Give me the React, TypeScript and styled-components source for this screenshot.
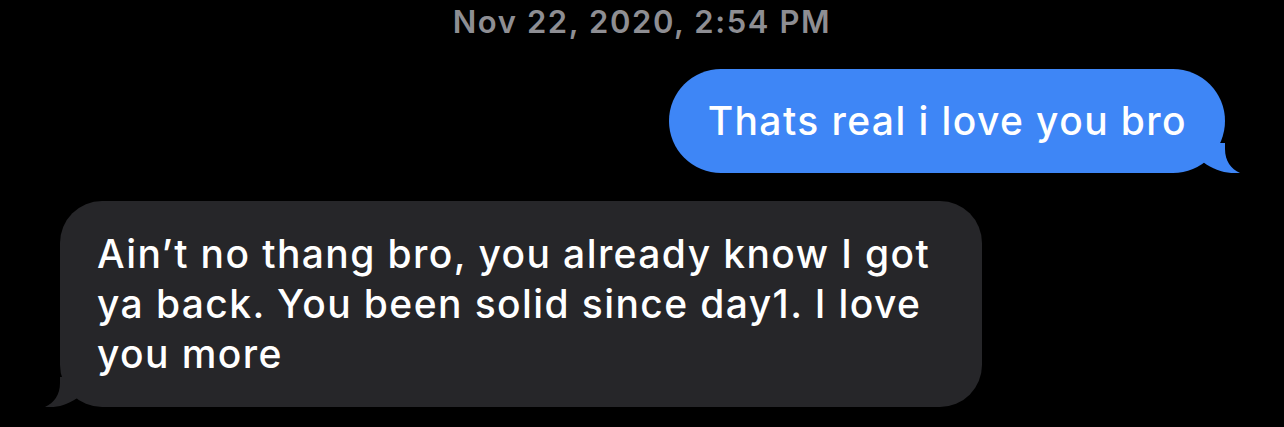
import styled, { createGlobalStyle } from 'styled-components';

const GlobalStyle = createGlobalStyle`
  html, body {
    margin: 0;
    padding: 0;
    background: #000000;
  }
  body {
    font-family: Inter, "Noto Sans", "Liberation Sans", sans-serif;
    -webkit-font-smoothing: antialiased;
  }
`;

const Screen = styled.div`
  width: 1284px;
  height: 427px;
  background: #000000;
  display: flex;
  flex-direction: column;
  overflow: hidden;
`;

const Stamp = styled.div`
  height: 42px;
  display: flex;
  align-items: center;
  justify-content: center;
  color: #8e8e93;
  font-size: 31px;
  font-weight: 600;
  letter-spacing: 1.6px;
`;

const Row = styled.div<{ mine: boolean }>`
  display: flex;
  justify-content: ${(p) => (p.mine ? 'flex-end' : 'flex-start')};
  padding: ${(p) => (p.mine ? '0 59px 0 0' : '0 0 0 60px')};
  margin-top: ${(p) => (p.mine ? '27px' : '28px')};
`;

const Bubble = styled.div<{ mine: boolean }>`
  position: relative;
  box-sizing: border-box;
  width: ${(p) => (p.mine ? 'auto' : '922px')};
  background: ${(p) => (p.mine ? '#3e86f6' : '#262629')};
  color: #ffffff;
  border-radius: ${(p) => (p.mine ? '52px' : '42px')};
  padding: ${(p) => (p.mine ? '27px 38px 27px 39px' : '28px 40px 28px 37px')};
  font-size: 39px;
  line-height: 50px;
  font-weight: 500;
  letter-spacing: 1.4px;
`;

const Tail = styled.svg<{ mine: boolean; edge: number }>`
  position: absolute;
  bottom: 0;
  width: ${(p) => p.edge + 15}px;
  height: 30px;
  ${(p) =>
    p.mine
      ? `right: -15px;`
      : `left: -15px; transform: scaleX(-1);`}
`;

function BubbleTail({ mine, color, edge }: { mine: boolean; color: string; edge: number }) {
  const w = edge + 15;
  // notch sits on the bubble's rounded corner, tip flares out past the edge
  const d = `M0 0 L${edge} 0 L${edge} 6 C${edge} 18, ${edge + 6} 26, ${w} 30 C${w - 12} 31, 12 28, 0 19 Z`;
  return (
    <Tail mine={mine} edge={edge} viewBox={`0 0 ${w} 30`}>
      <path d={d} fill={color} />
    </Tail>
  );
}

export default function App() {
  return (
    <>
      <GlobalStyle />
      <Screen>
        <Stamp>Nov 22, 2020, 2:54 PM</Stamp>
        <Row mine={true}>
          <Bubble mine={true}>
            Thats real i love you bro
            <BubbleTail mine={true} color="#3e86f6" edge={22} />
          </Bubble>
        </Row>
        <Row mine={false}>
          <Bubble mine={false}>
            Ain’t no thang bro, you already know I got ya back. You been solid since day1. I love you more
            <BubbleTail mine={false} color="#262629" edge={20} />
          </Bubble>
        </Row>
      </Screen>
    </>
  );
}
